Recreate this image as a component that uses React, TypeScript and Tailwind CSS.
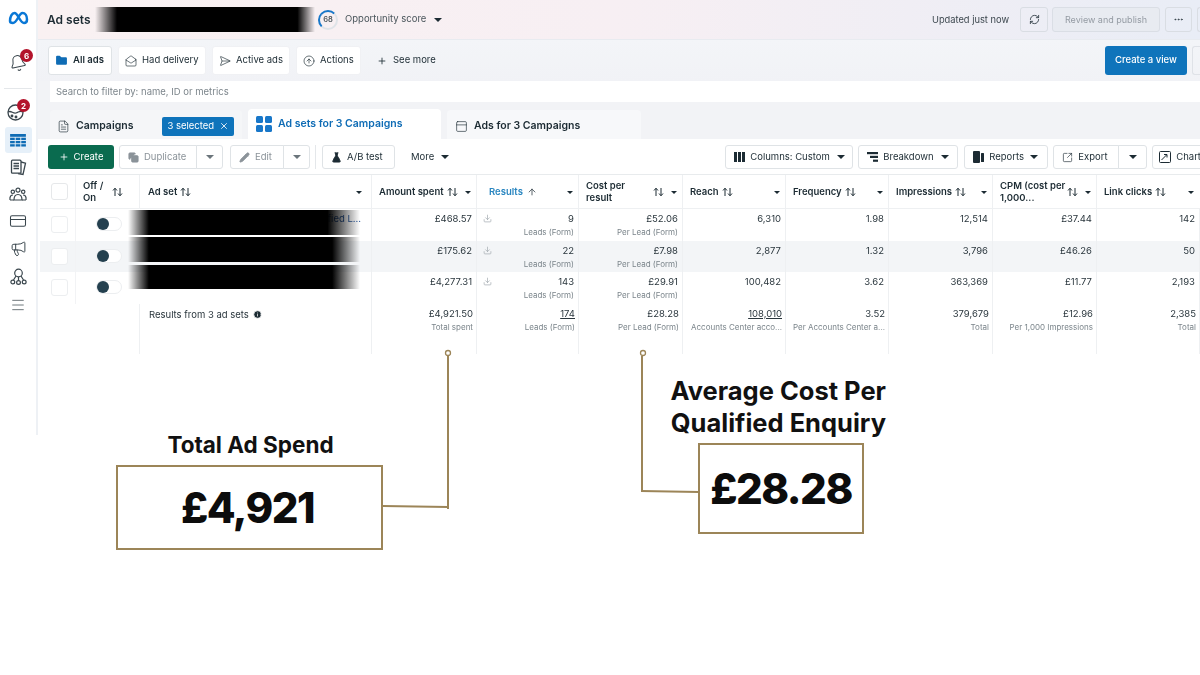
import type { ReactNode } from 'react';
import {
  ArrowUp, Bell, CircleArrowUp, Copy, CreditCard, Download, Ellipsis, FileText, FlaskConical, Folder,
  Info, MailOpen, Megaphone, Menu, PanelTop, Pencil, Plus, RefreshCw, SendHorizontal, SquareArrowOutUpRight, X,
} from 'lucide-react';

const COLS = 'grid grid-cols-[36px_64px_232px_105px_102px_104px_103px_103px_104px_104px_103px]';

function Caret({ className = '' }: { className?: string }) {
  return <span className={`inline-block shrink-0 w-0 h-0 border-x-[4px] border-x-transparent border-t-[4px] border-t-[#1c2b33] ${className}`} />;
}

function SmallCaret({ className = '' }: { className?: string }) {
  return <span className={`inline-block shrink-0 w-0 h-0 border-x-[3px] border-x-transparent border-t-[3px] border-t-[#1c2b33] ${className}`} />;
}

function Sort() {
  return (
    <svg width="11" height="10" viewBox="0 0 11 10" fill="none" stroke="#1c2b33" strokeWidth="1" className="shrink-0">
      <path d="M3 9V1.5M1 3.5L3 1.2L5 3.5" />
      <path d="M8 1V8.5M6 6.5L8 8.8L10 6.5" />
    </svg>
  );
}

function Btn({ children, className = '' }: { children: ReactNode; className?: string }) {
  return (
    <div className={`h-[24px] flex items-center gap-[5px] px-[6px] bg-white border border-[#dfe3e6] rounded-[3px] text-[9.5px] text-[#1c2b33] shrink-0 whitespace-nowrap [&>svg]:shrink-0 ${className}`}>
      {children}
    </div>
  );
}

function HeadCell({ children, last }: { children: ReactNode; last?: boolean }) {
  return <div className={`h-[33px] pt-[1px] flex items-center justify-between pl-[7px] pr-[5px] text-[9.5px] leading-[12.5px] font-semibold text-[#1c2b33] ${last ? '' : 'border-r border-[#eef0f2]'}`}>{children}</div>;
}

function Num({ value, sub, under, total }: { value: string; sub?: string; under?: boolean; total?: boolean }) {
  return (
    <div className={`h-full border-r border-[#eef0f2] pt-[3px] text-right overflow-hidden ${total ? 'pr-[3px]' : 'pr-[4px]'}`}>
      <div className={`text-[9.5px] leading-[14px] text-[#2a363d] ${under ? 'underline' : ''}`}>{value}</div>
      {sub && <div className="text-[8px] leading-[13px] text-[#7b858b] whitespace-nowrap">{sub}</div>}
    </div>
  );
}

function Toggle() {
  return (
    <div className="pt-[8px] pl-[20px]">
      <div className="w-[26px] h-[14px] bg-white border border-[#eceef0] rounded-full flex items-center">
        <span className="w-[12px] h-[12px] rounded-full bg-[#24404f]" />
      </div>
    </div>
  );
}

const rows = [
  { spent: '£468.57', res: '9', cost: '£52.06', reach: '6,310', freq: '1.98', imp: '12,514', cpm: '£37.44', clicks: '142', bg: 'bg-white', h: 'h-[32px]', name: 'Qualified L...' },
  { spent: '£175.62', res: '22', cost: '£7.98', reach: '2,877', freq: '1.32', imp: '3,796', cpm: '£46.26', clicks: '50', bg: 'bg-[#f3f5f7]', h: 'h-[31px]', name: '' },
  { spent: '£4,277.31', res: '143', cost: '£29.91', reach: '100,482', freq: '3.62', imp: '363,369', cpm: '£11.77', clicks: '2,193', bg: 'bg-white', h: 'h-[32px]', name: '' },
];

export default function App() {
  return (
    <div className="relative w-[1200px] h-[675px] overflow-hidden bg-white flex items-start font-['Inter',sans-serif] text-[#1c2b33]">
      {/* Barra lateral */}
      <aside className="w-[38px] h-[435px] shrink-0 border-r-2 border-[#eef1f5] flex flex-col items-center pt-[11px] blur-[0.3px]">
        <svg width="21" height="14" viewBox="0 0 42 28" fill="none" stroke="#0a78d6" strokeWidth="5" strokeLinecap="round">
          <path d="M4 20C4 11 8 4 13 4C20 4 24 24 32 24C36 24 38 21 38 17C38 9 34 4 29 4C22 4 18 24 10 24C6 24 4 23 4 20Z" />
        </svg>
        <div className="relative mt-[29px]">
          <Bell size={18} strokeWidth={1.4} className="-rotate-12 text-[#3a464d]" />
          <span className="absolute -top-[5px] -right-[6px] w-[13px] h-[13px] rounded-full bg-[#b3132b] text-white text-[8px] font-bold flex items-center justify-center">6</span>
        </div>
        <div className="w-[28px] h-px bg-[#e4e7ea] mt-[16px]" />
        <div className="relative mt-[15px] -ml-[5px]">
          <svg width="17" height="17" viewBox="0 0 17 17" fill="none" stroke="#3a464d" strokeWidth="1.3">
            <circle cx="8.5" cy="8.5" r="7.5" />
            <path d="M1 8C4 6 6 10 9 9C12 8 13 6 16 8" />
            <circle cx="5" cy="12" r="0.8" fill="#3a464d" />
            <circle cx="9" cy="13" r="0.8" fill="#3a464d" />
          </svg>
          <span className="absolute -top-[5px] -right-[6px] w-[13px] h-[13px] rounded-full bg-[#b3132b] text-white text-[8px] font-bold flex items-center justify-center">2</span>
        </div>
        <div className="w-[27px] h-[26px] rounded-[3px] bg-[#e6f0f9] mt-[6px] flex items-center justify-center">
          <svg width="16" height="13" viewBox="0 0 17 14" fill="#0f6cb5">
            <rect x="0" y="0" width="17" height="3" />
            <rect x="0" y="4" width="5" height="2.5" /><rect x="6" y="4" width="5" height="2.5" /><rect x="12" y="4" width="5" height="2.5" />
            <rect x="0" y="7.5" width="5" height="2.5" /><rect x="6" y="7.5" width="5" height="2.5" /><rect x="12" y="7.5" width="5" height="2.5" />
            <rect x="0" y="11" width="5" height="2.5" /><rect x="6" y="11" width="5" height="2.5" /><rect x="12" y="11" width="5" height="2.5" />
          </svg>
        </div>
        <svg width="17" height="17" viewBox="0 0 17 17" fill="none" stroke="#3a464d" strokeWidth="1.3" className="mt-[6px]">
          <path d="M11 3L15.5 4.2L13 15.5L8 14.5" />
          <rect x="1.5" y="1.2" width="9.5" height="13" rx="1" fill="white" />
          <path d="M3.5 4.5H9M3.5 7H9M3.5 9.5H9" />
        </svg>
        <svg width="18" height="15" viewBox="0 0 18 15" fill="none" stroke="#3a464d" strokeWidth="1.2" className="mt-[11px]">
          <circle cx="9" cy="3.2" r="2" /><circle cx="3.8" cy="4.8" r="1.7" /><circle cx="14.2" cy="4.8" r="1.7" />
          <path d="M5 13C5 9.5 6.5 7.5 9 7.5C11.5 7.5 13 9.5 13 13Z" />
          <path d="M1 13C0.5 9.5 2 8 4 8M17 13C17.5 9.5 16 8 14 8M1 13H5M13 13H17" />
        </svg>
        <CreditCard size={18} strokeWidth={1.4} className="mt-[10px] text-[#3a464d]" />
        <Megaphone size={17} strokeWidth={1.4} className="mt-[10px] text-[#3a464d]" />
        <svg width="17" height="18" viewBox="0 0 17 18" fill="none" stroke="#3a464d" strokeWidth="1.2" className="mt-[11px]">
          <circle cx="8.5" cy="5" r="3.8" />
          <path d="M6 8L3.5 12M11 8L13.5 12M8.5 9V12.5" />
          <circle cx="2.8" cy="14" r="1.9" /><circle cx="8.5" cy="14.5" r="1.9" /><circle cx="14.2" cy="14" r="1.9" />
        </svg>
        <Menu size={16} strokeWidth={1.2} className="mt-[11px] text-[#4a555b]" />
      </aside>

      <main className="w-[1162px] shrink-0 overflow-hidden blur-[0.3px]">
        {/* Cabecera */}
        <header className="h-[40px] pl-[9px] flex items-center bg-gradient-to-r from-[#f9f1f2] via-[#f7eff3] to-[#e9edf6] border-b border-[#e8ebf0]">
          <span className="text-[12px] font-semibold text-[#1c2b33] w-[271px] shrink-0">Ad sets</span>
          <div className="w-[20px] h-[20px] rounded-full border-2 border-[#dfe3e8] border-t-[#1877c9] border-l-[#1877c9] flex items-center justify-center text-[7.5px] font-semibold text-[#4a555b]">68</div>
          <span className="ml-[7px] text-[9.5px] text-[#4a555b]">Opportunity score</span>
          <Caret className="ml-[8px]" />
          <span className="ml-auto text-[9.3px] text-[#3c474e]">Updated just now</span>
          <div className="ml-[11px] w-[28px] h-[25px] border border-[#d9dde3] rounded-[3px] flex items-center justify-center">
            <RefreshCw size={11} className="text-[#36424a]" />
          </div>
          <div className="ml-[4px] w-[108px] h-[25px] border border-[#dadee5] rounded-[3px] bg-[#e8ebf1] flex items-center justify-center text-[9px] text-[#949ba3]">Review and publish</div>
          <div className="ml-[5px] w-[27px] h-[25px] border border-[#d9dde3] rounded-[3px] flex items-center justify-center">
            <Ellipsis size={11} className="text-[#36424a]" />
          </div>
          <div className="ml-[5px] w-[3px] h-[25px] border-l border-y border-[#d9dde3] rounded-l-[3px]" />
        </header>

        {/* Filtros */}
        <div className="h-[41px] pl-[10px] flex items-center gap-[6px] bg-gradient-to-b from-[#f3f5f8] to-[#f1f2f6]">
          <Btn className="h-[29px] w-[64px] border-[#5d9cc9] text-[#0f6cb5] font-semibold">
            <Folder size={13} fill="#0f6cb5" strokeWidth={0} /> All ads
          </Btn>
          <Btn className="h-[29px] w-[88px] border-[#f0f1f4]"><MailOpen size={12} strokeWidth={1.3} /> Had delivery</Btn>
          <Btn className="h-[29px] w-[78px] border-[#f0f1f4]"><SendHorizontal size={12} strokeWidth={1.3} /> Active ads</Btn>
          <Btn className="h-[29px] w-[65px] border-[#f0f1f4]"><CircleArrowUp size={12} strokeWidth={1.3} /> Actions</Btn>
          <div className="ml-[10px] flex items-center gap-[6px] text-[9.5px]"><Plus size={10} /> See more</div>
          <div className="ml-auto w-[82px] h-[29px] bg-[#0f74bb] rounded-[3px] text-white text-[9.5px] font-medium flex items-center justify-center">Create a view</div>
          <div className="-ml-px w-[8px] h-[29px] border-l border-y border-[#dfe2e7] rounded-l-[3px]" />
        </div>

        {/* Busqueda */}
        <div className="h-[28px] bg-[#f2f3f6] pl-[12px]">
          <div className="h-[21px] bg-white flex items-center pl-[6px] pt-[1px] text-[9.5px] text-[#7d868c]">Search to filter by: name, ID or metrics</div>
        </div>

        {/* Pestanas */}
        <div className="h-[30px] bg-[#f2f3f6] pl-[12px] flex items-end gap-[6px]">
          <div className="w-[192px] h-[29px] bg-[#f5f6f8] flex items-center pl-[7px] pt-[3px] rounded-t-[4px]">
            <FileText size={13} strokeWidth={1.2} />
            <span className="ml-[6px] text-[10.5px] font-semibold">Campaigns</span>
            <div className="ml-[29px] w-[72px] h-[19px] rounded-[2px] bg-[#0f74bb] text-white text-[9.5px] flex items-center justify-between px-[5px]">
              3 selected <X size={10} />
            </div>
          </div>
          <div className="w-[193px] h-[30px] bg-white rounded-t-[4px] flex items-center pl-[8px] text-[#0f6cb5]">
            <svg width="16" height="16" viewBox="0 0 16 16" fill="#1877c9"><rect width="7" height="7" rx="1.5" /><rect x="9" width="7" height="7" rx="1.5" /><rect y="9" width="7" height="7" rx="1.5" /><rect x="9" y="9" width="7" height="7" rx="1.5" /></svg>
            <span className="ml-[6px] text-[10.5px] font-semibold">Ad sets for 3 Campaigns</span>
          </div>
          <div className="w-[194px] h-[29px] bg-[#f7f8fa] rounded-t-[4px] flex items-center pl-[8px] pt-[3px]">
            <PanelTop size={13} strokeWidth={1.2} />
            <span className="ml-[6px] text-[10.5px] font-semibold">Ads for 3 Campaigns</span>
          </div>
        </div>

        {/* Barra de acciones */}
        <div className="h-[36px] bg-white pl-[10px] pt-[1px] flex items-center border-b border-[#e8ebed] whitespace-nowrap">
          <div className="w-[66px] h-[24px] shrink-0 bg-[#0a6b4f] rounded-[3px] text-white text-[9.5px] flex items-center justify-center gap-[5px]"><Plus size={10} /> Create</div>
          <div className="ml-[5px] flex shrink-0">
            <Btn className="w-[78px] pl-[8px] text-[#8b9399] rounded-r-none"><Copy size={11} fill="#8b9399" /> Duplicate</Btn>
            <Btn className="w-[27px] -ml-px rounded-l-none justify-center"><Caret className="border-t-[#6b757b]" /></Btn>
          </div>
          <div className="ml-[7px] flex shrink-0">
            <Btn className="w-[54px] pl-[8px] text-[#8b9399] rounded-r-none"><Pencil size={11} fill="#8b9399" /> Edit</Btn>
            <Btn className="w-[27px] -ml-px rounded-l-none justify-center"><Caret className="border-t-[#6b757b]" /></Btn>
          </div>
          <div className="ml-[5px] w-px h-[24px] shrink-0 bg-[#e4e7ea]" />
          <Btn className="ml-[6px] w-[73px] pl-[8px]"><FlaskConical size={11} fill="#1c2b33" /> A/B test</Btn>
          <div className="ml-[16px] flex items-center gap-[7px] text-[9.5px] shrink-0">More <Caret /></div>
          <Btn className="ml-[276px] w-[128px] pl-[8px]">
            <svg width="11" height="10" viewBox="0 0 11 10" fill="#1c2b33"><rect width="3" height="10" /><rect x="4" width="3" height="10" /><rect x="8" width="3" height="10" /></svg>
            Columns: Custom <Caret className="ml-[2px]" />
          </Btn>
          <Btn className="ml-[5px] w-[100px] pl-[8px]">
            <svg width="11" height="10" viewBox="0 0 11 10" fill="#1c2b33"><rect width="11" height="2.2" /><rect x="3" y="3.8" width="8" height="2.2" /><rect x="6" y="7.6" width="5" height="2.2" /></svg>
            Breakdown <Caret className="ml-[2px]" />
          </Btn>
          <Btn className="ml-[6px] w-[84px] pl-[8px]">
            <svg width="11" height="12" viewBox="0 0 11 12" fill="#1c2b33"><rect width="7" height="12" rx="1" /><rect x="8" y="2" width="3" height="9" rx="0.5" /></svg>
            Reports <Caret className="ml-[1px]" />
          </Btn>
          <div className="ml-[5px] flex shrink-0">
            <Btn className="w-[66px] pl-[8px] rounded-r-none"><SquareArrowOutUpRight size={11} strokeWidth={1.4} /> Export</Btn>
            <Btn className="w-[29px] -ml-px rounded-l-none justify-center"><Caret /></Btn>
          </div>
          <Btn className="ml-[5px] w-[60px] gap-[3px] rounded-r-none">
            <svg width="12" height="12" viewBox="0 0 12 12" fill="none" stroke="#1c2b33" strokeWidth="1"><rect x="0.5" y="0.5" width="11" height="11" rx="1" /><path d="M2.5 9L7.5 4M5 3.5H8V6.5" /></svg>
            Chart
          </Btn>
        </div>

        {/* Tabla */}
        <div className="w-[1162px] ml-[2px]">
          <div className={`${COLS} bg-white border-b border-[#eef0f2]`}>
            <div className="h-[33px] flex items-center pl-[11px] border-r border-[#eef0f2]"><span className="w-[17px] h-[17px] border border-[#e6e8ea] rounded-[3px]" /></div>
            <HeadCell><span className="w-[28px]">Off / On</span><span className="mr-[11px]"><Sort /></span></HeadCell>
            <HeadCell><span className="flex items-center gap-[3px] pl-[1px]">Ad set <Sort /></span><SmallCaret className="mr-[4px]" /></HeadCell>
            <HeadCell><span className="flex items-center gap-[3px] whitespace-nowrap">Amount spent <Sort /></span><SmallCaret /></HeadCell>
            <HeadCell><span className="flex items-center gap-[4px] pl-[5px] text-[#2a86c0]">Results <ArrowUp size={10} className="text-[#3a464d]" /></span><SmallCaret /></HeadCell>
            <HeadCell><span className="w-[46px]">Cost per result</span><span className="flex items-center gap-[7px]"><Sort /><SmallCaret /></span></HeadCell>
            <HeadCell><span className="flex items-center gap-[3px]">Reach <Sort /></span><SmallCaret /></HeadCell>
            <HeadCell><span className="flex items-center gap-[3px]">Frequency <Sort /></span><SmallCaret /></HeadCell>
            <HeadCell><span className="flex items-center gap-[3px]">Impressions <Sort /></span><SmallCaret /></HeadCell>
            <HeadCell><span className="w-[66px] whitespace-nowrap">CPM (cost per<br />1,000...</span><span className="flex items-center gap-[7px]"><Sort /><SmallCaret /></span></HeadCell>
            <HeadCell last><span className="flex items-center gap-[3px]">Link clicks <Sort /></span><SmallCaret className="mr-[1px]" /></HeadCell>
          </div>

          {rows.map((r) => (
            <div key={r.spent} className={`${COLS} ${r.bg} ${r.h}`}>
              <div className="pl-[11px] pt-[7px] border-r border-[#f2f3f5]"><div className="w-[17px] h-[17px] bg-white border border-[#eceef0] rounded-[3px]" /></div>
              <Toggle />
              <div className="border-r border-[#eef0f2] pt-[3px] pr-[10px] text-right text-[9.5px] leading-[14px] text-[#2f5c9e]">{r.name}</div>
              <Num value={r.spent} />
              <div className="h-full relative">
                <Download size={9} className="absolute left-[6px] top-[5px] text-[#a8afb4]" />
                <Num value={r.res} sub="Leads (Form)" />
              </div>
              <Num value={r.cost} sub="Per Lead (Form)" />
              <Num value={r.reach} />
              <Num value={r.freq} />
              <Num value={r.imp} />
              <Num value={r.cpm} />
              <Num value={r.clicks} />
            </div>
          ))}

          {/* Totales */}
          <div className={`${COLS} h-[50px] bg-white`}>
            <div />
            <div className="border-r border-[#eef0f2]" />
            <div className="border-r border-[#eef0f2] pl-[9px] pt-[4px] flex items-start gap-[4px] text-[9.5px] leading-[14px] text-[#2a363d]">Results from 3 ad sets <Info size={9} fill="#1c2b33" className="mt-[2px] text-white" /></div>
            <Num total value="£4,921.50" sub="Total spent" />
            <Num total value="174" sub="Leads (Form)" under />
            <Num total value="£28.28" sub="Per Lead (Form)" />
            <Num total value="108,010" sub="Accounts Center acco..." under />
            <Num total value="3.52" sub="Per Accounts Center a..." />
            <Num total value="379,679" sub="Total" />
            <Num total value="£12.96" sub="Per 1,000 Impressions" />
            <Num total value="2,385" sub="Total" />
          </div>
        </div>
      </main>

      {/* Tapado de nombres */}
      <div className="absolute left-[95px] top-[7px] w-[220px] h-[25px] bg-[linear-gradient(to_right,transparent,#000_10%,#000_92%,transparent)]" />
      <div className="absolute left-[128px] top-[210px] w-[232px] h-[25px] bg-[linear-gradient(to_right,transparent,#000_9%,#000_86%,transparent)]" />
      <div className="absolute left-[128px] top-[237px] w-[232px] h-[25px] bg-[linear-gradient(to_right,transparent,#000_9%,#000_88%,transparent)]" />
      <div className="absolute left-[128px] top-[265px] w-[232px] h-[24px] bg-[linear-gradient(to_right,transparent,#000_9%,#000_88%,transparent)]" />

      {/* Anotaciones */}
      <svg className="absolute left-0 top-0" width="1200" height="675" fill="none" stroke="#9c8558" strokeWidth="2">
        <circle cx="448" cy="353" r="2.5" strokeWidth="1.3" />
        <path d="M448 356V509" />
        <path d="M383 506L448 507" />
        <circle cx="643" cy="353" r="2.5" strokeWidth="1.3" />
        <path d="M642 356V491" />
        <path d="M641 491L699 492" />
      </svg>
      <div className="absolute left-[116px] top-[431px] w-[267px] flex flex-col items-center">
        <span className="pl-[2px] text-[22.5px] leading-[28px] font-bold text-[#111]">Total Ad Spend</span>
        <div className="mt-[6px] w-[267px] h-[85px] pr-[4px] border-2 border-[#9c8558] bg-white flex items-center justify-center text-[42px] font-extrabold tracking-[-1.5px] text-[#0c0c0c]">£4,921</div>
      </div>
      <div className="absolute left-[650px] top-[375px] w-[236px] text-right text-[25.5px] leading-[32px] font-bold text-[#111]">
        Average Cost Per<br />Qualified Enquiry
      </div>
      <div className="absolute left-[698px] top-[443px] w-[166px] h-[91px] border-2 border-[#9c8558] bg-white flex items-center justify-center text-[42px] font-extrabold tracking-[-1.5px] text-[#0c0c0c]">£28.28</div>
    </div>
  );
}
